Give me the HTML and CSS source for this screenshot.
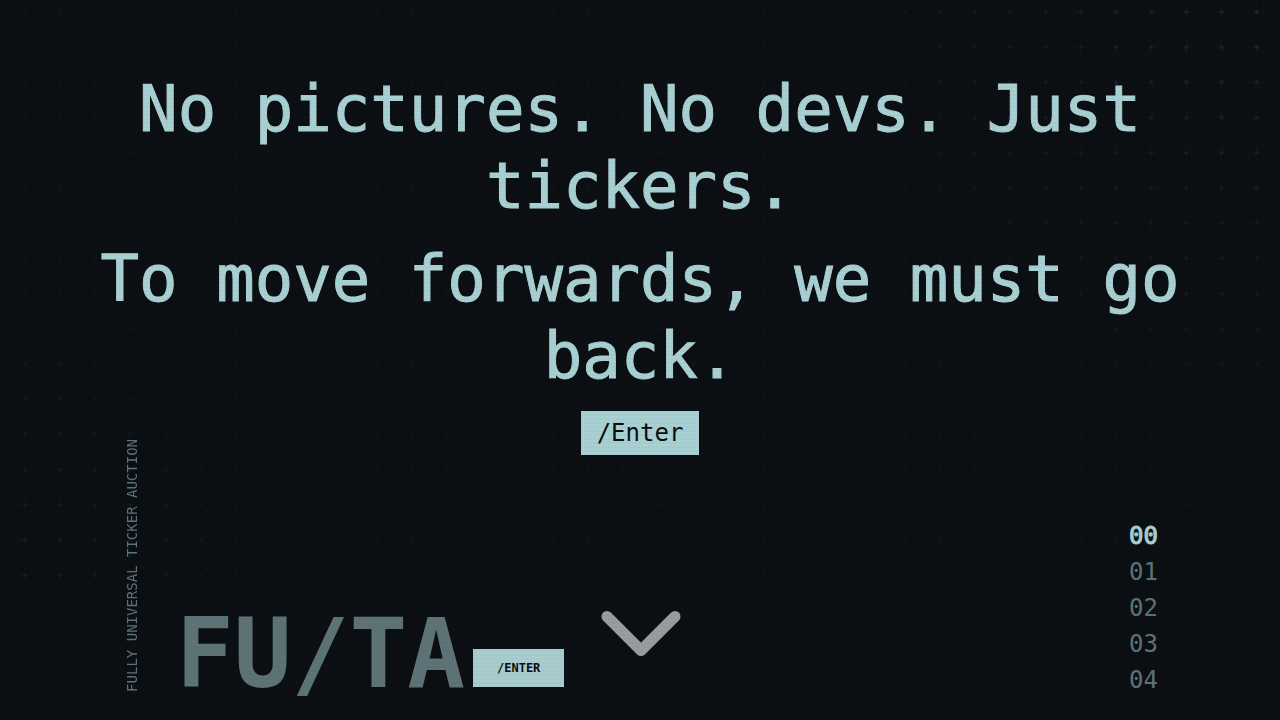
FILE: index.html
```html
<!DOCTYPE html>
<html lang="en">
<head>
<meta charset="utf-8">
<meta name="viewport" content="width=device-width, initial-scale=1">
<title>FU/TA</title>
<link rel="stylesheet" href="styles.css">
</head>
<body>
<svg class="grid" viewBox="0 0 1280 720" preserveAspectRatio="xMidYMid slice" aria-hidden="true">
  <defs>
    <pattern id="cells" width="35.2" height="35.2" patternUnits="userSpaceOnUse" x="7.2" y="-5.6">
      <path d="M17.6 0V35.2M0 17.6H35.2" stroke="#5c8286" stroke-opacity=".25" stroke-width="1"/>
      <circle cx="17.6" cy="17.6" r="2" fill="#8fb0b2" fill-opacity=".5"/>
    </pattern>
    <radialGradient id="right" gradientUnits="userSpaceOnUse" cx="1280" cy="0" r="400">
      <stop offset="0" stop-color="#fff" stop-opacity=".22"/>
      <stop offset="1" stop-color="#fff" stop-opacity="0"/>
    </radialGradient>
    <radialGradient id="left" gradientUnits="userSpaceOnUse" cx="0" cy="576" r="240">
      <stop offset="0" stop-color="#fff" stop-opacity=".14"/>
      <stop offset="1" stop-color="#fff" stop-opacity="0"/>
    </radialGradient>
    <mask id="fade">
      <rect width="1280" height="579" fill="#fff" fill-opacity=".06"/>
      <rect width="1280" height="579" fill="url(#right)"/>
      <rect width="1280" height="579" fill="url(#left)"/>
    </mask>
  </defs>
  <rect width="1280" height="579" fill="url(#cells)" mask="url(#fade)"/>
</svg>

<div class="page">
  <footer class="dock">
    <div class="brand">
      <span class="tagline">FULLY UNIVERSAL TICKER AUCTION</span>
      <span class="logo">FU/TA</span>
      <button class="enter-small" type="button">/ENTER</button>
    </div>
    <button class="next" type="button" aria-label="Next section">
      <svg width="80" height="48" viewBox="0 0 80 48" aria-hidden="true"><path d="M6 6.500L40 40.500L74 6.500" fill="none" stroke="#999fa0" stroke-width="11" stroke-linecap="round" stroke-linejoin="round"/></svg>
    </button>
    <nav class="sections" aria-label="Sections">
      <a class="section current" href="#s0">00</a>
      <a class="section" href="#s1">01</a>
      <a class="section" href="#s2">02</a>
      <a class="section" href="#s3">03</a>
      <a class="section" href="#s4">04</a>
    </nav>
  </footer>

  <main class="hero">
    <h1 class="statement">No pictures. No devs. Just tickers.</h1>
    <p class="statement">To move forwards, we must go back.</p>
    <button class="enter" type="button">/Enter</button>
  </main>
</div>
<div class="scanlines" aria-hidden="true"></div>
</body>
</html>
```

FILE: styles.css
```css
* {
  box-sizing: border-box;
}

body {
  margin: 0;
  background: #0b0e12;
  color: #abd3d6;
  font-family: "DejaVu Sans Mono", monospace;
}

button {
  border: 0;
  padding: 0;
  background: none;
  color: #080b0e;
  font-family: inherit;
  cursor: pointer;
}

.grid {
  position: absolute;
  inset: 0;
  width: 100%;
  height: 100%;
}

/* The hero and the dock share one cell, so the dock's tall side columns rise beside the hero. */
.page {
  position: relative;
  display: grid;
  grid-template: "stage" 1fr / 1fr;
  min-height: 100vh;
}

.hero {
  grid-area: stage;
  align-self: start;
  display: flex;
  flex-direction: column;
  align-items: center;
  gap: 16px;
  padding: 71px 64px 0;
}

.statement {
  margin: 0;
  font-size: 64px;
  font-weight: 400;
  line-height: 77px;
  text-align: center;
  -webkit-text-stroke: 1px currentColor;
}

.enter {
  height: 44px;
  padding: 0 16px;
  background: #abd3d6;
  font-size: 24px;
  line-height: 32px;
}

.dock {
  grid-area: stage;
  align-self: end;
  display: grid;
  grid-template-columns: 1fr auto 1fr;
  align-items: end;
  padding: 0 122px 22px 124px;
}

.brand {
  display: flex;
  align-items: flex-end;
  white-space: nowrap;
}

.tagline {
  writing-mode: vertical-rl;
  transform: rotate(180deg);
  margin: 0 36px 6px 0;
  color: #5f7478;
  font-size: 14px;
  line-height: 16px;
}

.logo {
  color: #5f7478;
  font-size: 96px;
  font-weight: 700;
  line-height: 88px;
}

.enter-small {
  height: 38px;
  margin: 0 0 11px 8px;
  padding: 0 24px;
  background: #abcfd1;
  font-size: 12px;
  font-weight: 700;
}

.next {
  display: flex;
  margin-bottom: 40px;
}

.sections {
  display: flex;
  flex-direction: column;
  justify-self: end;
}

.section {
  color: #5f7478;
  font-size: 24px;
  line-height: 36px;
  text-decoration: none;
}

.current {
  color: #abd3d6;
  -webkit-text-stroke: 1px currentColor;
}

.scanlines {
  position: fixed;
  inset: 0;
  pointer-events: none;
  background:
    linear-gradient(rgba(18, 16, 16, 0) 50%, rgba(0, 0, 0, 0.02) 50%) 0 0 / 100% 4px,
    linear-gradient(90deg, rgba(255, 0, 0, 0.03), rgba(0, 255, 0, 0.01), rgba(0, 0, 255, 0.03)) 0 0 / 3px 100%;
}
```
